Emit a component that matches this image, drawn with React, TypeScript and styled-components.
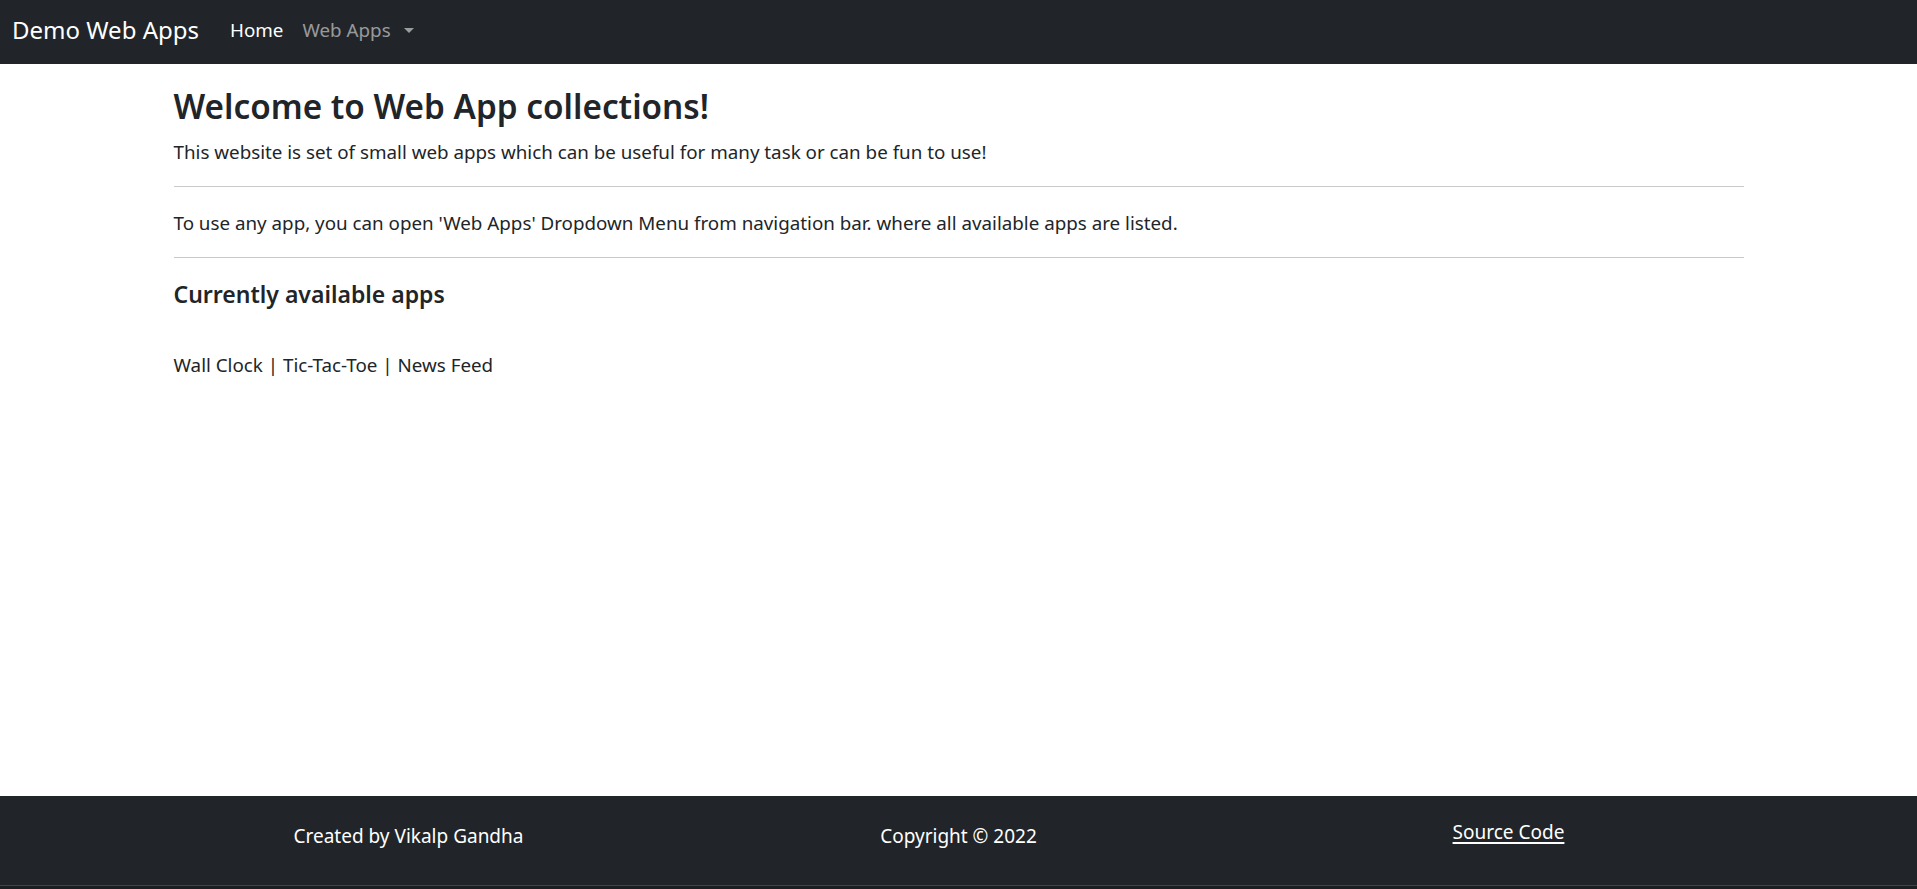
import React from "react";
import styled, { createGlobalStyle } from "styled-components";

const GlobalStyle = createGlobalStyle`
  html, body {
    margin: 0;
    padding: 0;
  }
  body {
    background: #1d1e21;
    font-family: "Noto Sans", "Open Sans", "Liberation Sans", sans-serif;
    color: #212529;
    font-size: 18.8px;
    line-height: 1.5;
  }
  * { box-sizing: border-box; }
`;

const Page = styled.div`
  min-height: calc(100vh - 3px);
  display: flex;
  flex-direction: column;
  background: #ffffff;
`;

const NavBar = styled.nav`
  height: 64px;
  background: #212529;
  display: flex;
  align-items: center;
  padding: 0 0 4px 12px;
`;

const Brand = styled.a`
  font-size: 24px;
  line-height: 32px;
  color: #ffffff;
  text-decoration: none;
  margin-right: 31px;
  white-space: nowrap;
`;

const NavLinks = styled.div`
  display: flex;
  align-items: center;
  gap: 19px;
`;

const NavLink = styled.a<{ $active?: boolean; $dropdown?: boolean }>`
  font-size: 18.8px;
  line-height: 26px;
  color: ${(p) => (p.$active ? "#ffffff" : "rgba(255, 255, 255, 0.55)")};
  text-decoration: none;
  display: flex;
  align-items: center;
  white-space: nowrap;
  ${(p) =>
    p.$dropdown
      ? `
    &::after {
      content: "";
      display: inline-block;
      margin-left: 13px;
      margin-top: 1px;
      border-top: 5px solid rgba(255, 255, 255, 0.55);
      border-left: 5px solid transparent;
      border-right: 5px solid transparent;
      border-bottom: 0;
    }
  `
      : ""}
`;

const Main = styled.main`
  flex: 1;
  width: 1570px;
  margin: 0 auto;
  padding-top: 23px;
`;

const Title = styled.h2`
  margin: 0;
  font-size: 33.3px;
  line-height: 38px;
  font-weight: 600;
  color: #212529;
`;

const Text = styled.p<{ $top?: number }>`
  margin: ${(p) => p.$top ?? 0}px 0 0;
  font-size: 18.8px;
  line-height: 24px;
  color: #212529;
`;

const Rule = styled.hr<{ $after?: number }>`
  margin: 22px 0 ${(p) => p.$after ?? 23}px;
  border: 0;
  border-top: 1px solid #c8c9ca;
  height: 0;
`;

const SubTitle = styled.h4`
  margin: 0;
  font-size: 23px;
  line-height: 29px;
  font-weight: 600;
  color: #212529;
`;

const AppLinks = styled.p`
  margin: 44px 0 0;
  font-size: 18.8px;
  line-height: 24px;
  color: #212529;
`;

const Footer = styled.footer`
  height: 90px;
  background: #212529;
  border-bottom: 1px solid #434447;
  display: grid;
  grid-template-columns: repeat(3, 550px);
  justify-content: center;
  align-items: start;
  padding-top: 28px;
`;

const FooterCell = styled.div<{ $raise?: boolean }>`
  text-align: center;
  color: #ffffff;
  font-size: 19px;
  line-height: 24px;
  margin-top: ${(p) => (p.$raise ? -4 : 0)}px;
`;

const FooterLink = styled.a`
  color: #ffffff;
  text-decoration: underline;
  text-decoration-thickness: 1.5px;
  text-underline-offset: 3px;
`;

export default function App() {
  return (
    <>
      <GlobalStyle />
      <Page>
        <NavBar>
          <Brand href="#">Demo Web Apps</Brand>
          <NavLinks>
            <NavLink href="#" $active>
              Home
            </NavLink>
            <NavLink href="#" $dropdown>
              Web Apps
            </NavLink>
          </NavLinks>
        </NavBar>
        <Main>
          <Title>Welcome to Web App collections!</Title>
          <Text $top={15}>
            This website is set of small web apps which can be useful for many
            task or can be fun to use!
          </Text>
          <Rule $after={24} />
          <Text>
            To use any app, you can open 'Web Apps' Dropdown Menu from
            navigation bar. where all available apps are listed.
          </Text>
          <Rule $after={22} />
          <SubTitle>Currently available apps</SubTitle>
          <AppLinks>Wall Clock | Tic-Tac-Toe | News Feed</AppLinks>
        </Main>
        <Footer>
          <FooterCell>Created by Vikalp Gandha</FooterCell>
          <FooterCell>Copyright © 2022</FooterCell>
          <FooterCell $raise>
            <FooterLink href="#">Source Code</FooterLink>
          </FooterCell>
        </Footer>
      </Page>
    </>
  );
}
